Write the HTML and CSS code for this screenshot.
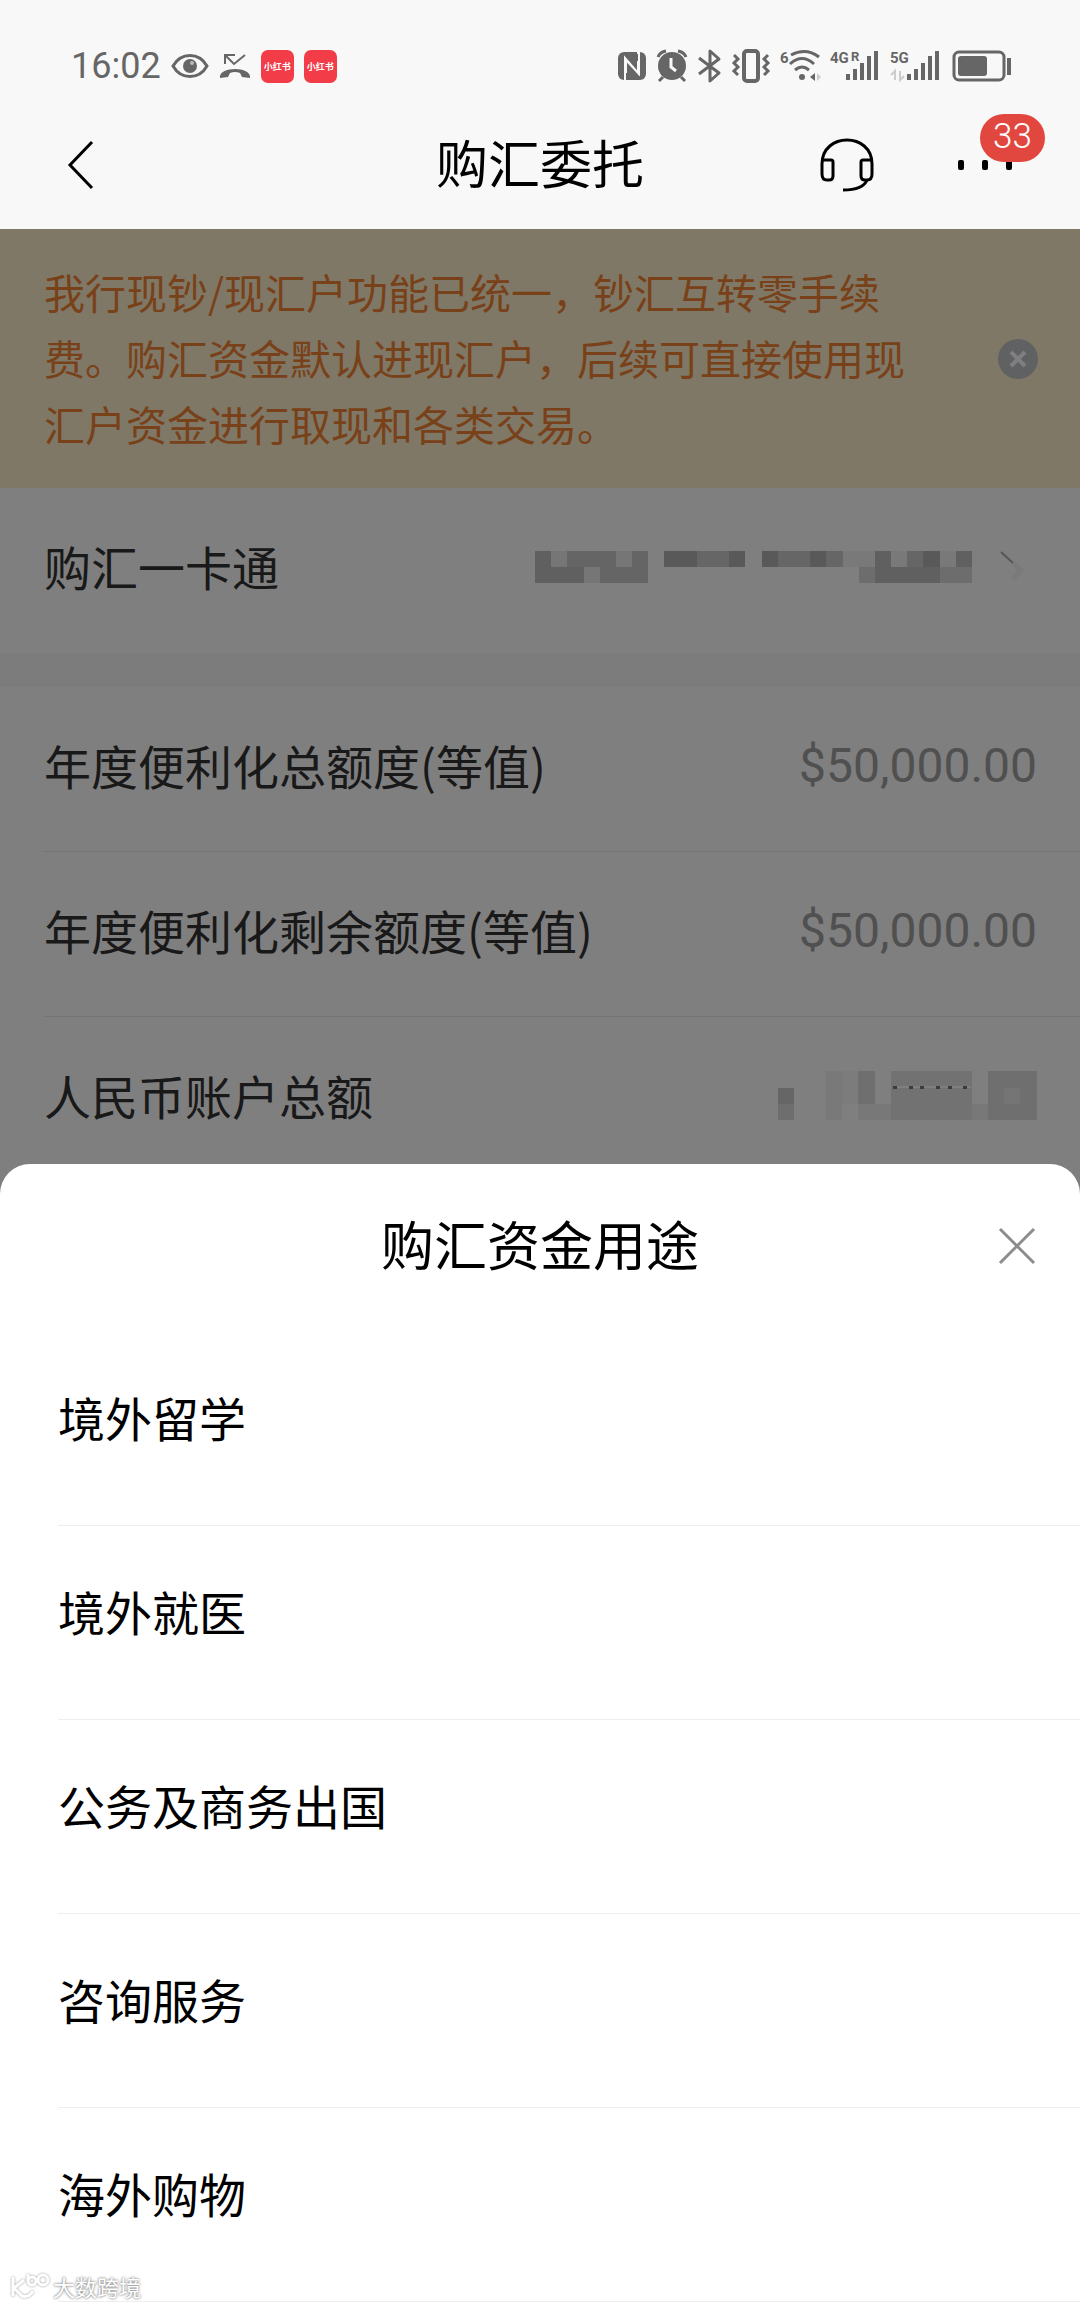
FILE: index.html
```
<!DOCTYPE html>
<html lang="zh-CN">
<head>
  <meta charset="UTF-8" />
  <meta name="viewport" content="width=device-width, initial-scale=1.0" />
  <title>购汇委托</title>
  <link rel="stylesheet" href="styles.css">
</head>
<body>
  <header>
    <div class="status-bar">
      <div class="status-left">
        <span class="time">16:02</span>
        <svg class="eye" width="38" height="26" viewBox="0 0 38 26">
          <path d="M2 13C10 -1 28 -1 36 13C28 27 10 27 2 13Z" fill="none" stroke="#666" stroke-width="3" />
          <circle cx="19" cy="13" r="7" fill="#666" />
          <circle cx="21" cy="10" r="2" fill="#bbb" />
        </svg>
        <svg class="missed-call" width="32" height="26" viewBox="0 0 32 26">
          <path d="M6 11V2H16M6 2L15 11L26 2" fill="none" stroke="#666" stroke-width="2" />
          <path d="M1 25C-1 13 33 13 31 25L23 24L21 20Q16 18 11 20L9 24Z" fill="#666" />
        </svg>
        <span class="app-icon">小红书</span>
        <span class="app-icon">小红书</span>
      </div>
      <div class="status-right">
        <svg width="28" height="34" viewBox="0 0 28 34">
          <rect y="3" width="28" height="28" rx="6" fill="#666" />
          <path d="M7 31V9L20 24V12M20 3V5M21 3V25L8 11V24" fill="none" stroke="#f8f8f8" stroke-width="2" />
        </svg>
        <svg width="32" height="34" viewBox="0 0 32 34">
          <circle cx="16" cy="17" r="14" fill="#666" />
          <path d="M2 8Q4 3 10 2M30 8Q28 3 22 2M7 28L3 32M25 28L29 32" fill="none" stroke="#666" stroke-width="3" />
          <path d="M15 9V18L20 22" fill="none" stroke="#f8f8f8" stroke-width="3" />
        </svg>
        <svg width="24" height="34" viewBox="0 0 24 34">
          <path d="M1 9L21 24L12 32V2L21 10L1 25" fill="none" stroke="#666" stroke-width="3" stroke-linejoin="round" />
        </svg>
        <svg width="38" height="34" viewBox="0 0 38 34">
          <rect x="12" y="2" width="14" height="30" rx="3" fill="none" stroke="#666" stroke-width="4" />
          <path d="M2 6L6 10L2 14L6 18L2 22L6 26M36 6L32 10L36 14L32 18L36 22L32 26" fill="none" stroke="#666" stroke-width="3" />
        </svg>
        <svg width="40" height="34" viewBox="0 0 40 34">
          <text x="0" y="14" class="signal-text">6</text>
          <path d="M11 6Q26 -2 39 8M10 15Q22 4 34 15M15 21Q22 15 29 21" fill="none" stroke="#666" stroke-width="3" />
          <circle cx="22" cy="28" r="3" fill="#666" />
          <path d="M35 24V32L30 28Z" fill="#666" />
          <path d="M37 24V32L41 28Z" fill="#ccc" />
        </svg>
        <svg width="50" height="34" viewBox="0 0 50 34">
          <text x="0" y="14" class="signal-text">4G</text>
          <text x="21" y="12" class="signal-text signal-small">R</text>
          <path d="M18 31V25M25 31V20M32 31V14M39 31V7M46 31V2" stroke="#666" stroke-width="4" />
        </svg>
        <svg width="52" height="34" viewBox="0 0 52 34">
          <text x="0" y="14" class="signal-text">5G</text>
          <path d="M5 31V22L1 26M10 22V31L14 27" fill="none" stroke="#ccc" stroke-width="2" />
          <path d="M19 31V25M26 31V20M33 31V14M40 31V7M47 31V2" stroke="#666" stroke-width="4" />
        </svg>
        <svg width="60" height="34" viewBox="0 0 60 34">
          <rect x="2" y="3" width="50" height="28" rx="5" fill="none" stroke="#666" stroke-width="3" />
          <rect x="6" y="7" width="29" height="20" rx="3" fill="#666" />
          <rect x="55" y="9" width="4" height="17" fill="#666" />
        </svg>
      </div>
    </div>
    <nav>
      <button type="button" class="back-btn" aria-label="返回">
        <svg width="26" height="50" viewBox="0 0 26 50">
          <path d="M24 2L2 25L24 48" fill="none" stroke="#000" stroke-width="3" />
        </svg>
      </button>
      <h1>购汇委托</h1>
      <div class="nav-actions">
        <button type="button" aria-label="客服">
          <svg width="54" height="54" viewBox="0 0 54 54" fill="none" stroke="#000" stroke-width="3">
            <path d="M2 26C2 -6 52 -6 52 26" />
            <path d="M3 22H11Q13 22 13 24V38Q13 42 9 42H7Q2 42 2 36V26" />
            <path d="M51 22H43Q41 22 41 24V38Q41 42 45 42H47Q52 42 52 36V26" />
            <path d="M47 42Q43 52 23 52" />
          </svg>
        </button>
        <button type="button" class="more-btn" aria-label="更多">
          <svg width="54" height="10" viewBox="0 0 54 10">
            <rect width="6" height="10" rx="2" />
            <rect x="24" width="6" height="10" rx="2" />
            <rect x="48" width="6" height="10" rx="2" />
          </svg>
          <span class="badge">33</span>
        </button>
      </div>
    </nav>
  </header>

  <main>
    <div class="notice">
      <p>我行现钞/现汇户功能已统一，钞汇互转零手续费。购汇资金默认进现汇户，后续可直接使用现汇户资金进行取现和各类交易。</p>
      <button type="button" aria-label="关闭提示">
        <svg width="40" height="40" viewBox="0 0 40 40">
          <circle cx="20" cy="20" r="20" fill="#c0c2c6" />
          <path d="M13 13L27 27M27 13L13 27" stroke="#fff" stroke-width="4" />
        </svg>
      </button>
    </div>

    <div class="row">
      <span>购汇一卡通</span>
      <div class="card-number">
        <!-- masked card number -->
        <svg width="437" height="32" viewBox="0 0 27 2" preserveAspectRatio="none" shape-rendering="crispEdges">
          <path d="M0 0h1v1h-1zM0 1h3v1h-3z" fill="#c0c0c0" />
          <path d="M2 0h3v1h-3zM6 0h1v1h-1zM4 1h3v1h-3z" fill="#cacaca" />
          <path d="M1 0h1v1h-1zM5 0h1v1h-1zM3 1h1v1h-1z" fill="#ececec" />
          <path d="M8 0h2v1h-2zM12 0h1v1h-1zM14 0h1v1h-1zM17 0h1v1h-1zM24 0h1v1h-1z" fill="#b2b2b2" />
          <path d="M10 0h2v1h-2zM15 0h2v1h-2zM18 0h1v1h-1zM23 0h1v1h-1z" fill="#cccccc" />
          <path d="M19 0h2v1h-2zM22 0h1v1h-1zM25 0h1v1h-1z" fill="#f2f2f2" />
          <path d="M21 0h1v1h-1zM26 0h1v1h-1zM21 1h4v1h-4z" fill="#c0c0c0" />
          <path d="M20 1h1v1h-1zM25 1h2v1h-2z" fill="#dadada" />
        </svg>
        <svg width="37" height="32" viewBox="0 0 37 32">
          <path d="M1 1L13 12" stroke="#aaa" stroke-width="2" />
          <path d="M13 12L21 19L13 28" fill="none" stroke="#f4f4f4" stroke-width="5" />
        </svg>
      </div>
    </div>

    <div class="group">
      <div class="row">
        <span>年度便利化总额度(等值)</span>
        <span class="amount">$50,000.00</span>
      </div>
      <div class="row">
        <span>年度便利化剩余额度(等值)</span>
        <span class="amount">$50,000.00</span>
      </div>
      <div class="row">
        <span>人民币账户总额</span>
        <!-- masked balance -->
        <svg width="259" height="49" viewBox="0 0 259 49" shape-rendering="crispEdges">
          <rect y="17" width="16" height="16" fill="#ccc" />
          <rect y="33" width="16" height="16" fill="#dcdcdc" />
          <rect x="48" width="16" height="49" fill="#f2f2f2" />
          <rect x="64" width="16" height="33" fill="#f8f8f8" />
          <rect x="80" width="17" height="33" fill="#dedede" />
          <rect x="80" y="33" width="33" height="16" fill="#f0f0f0" />
          <rect x="113" width="81" height="49" fill="#e4e4e4" />
          <rect x="194" y="33" width="16" height="16" fill="#f0f0f0" />
          <rect x="210" width="49" height="49" fill="#dedede" />
          <rect x="226" y="17" width="16" height="16" fill="#eaeaea" />
          <path d="M119 16h74" stroke="#fff" stroke-width="2" />
          <path d="M115 16h4M131 16h4M142 16h4M158 16h4M170 16h4M185 16h4" stroke="#777" stroke-width="3" />
        </svg>
      </div>
    </div>
  </main>

  <section class="sheet" role="dialog" aria-labelledby="sheet-title">
    <div class="sheet-header">
      <h2 id="sheet-title">购汇资金用途</h2>
      <button type="button" class="close-btn" aria-label="关闭">
        <svg width="36" height="36" viewBox="0 0 36 36">
          <path d="M1 1L35 35M35 1L1 35" stroke="#8c8c8c" stroke-width="3" />
        </svg>
      </button>
    </div>
    <ul>
      <li><button type="button">境外留学</button></li>
      <li><button type="button">境外就医</button></li>
      <li><button type="button">公务及商务出国</button></li>
      <li><button type="button">咨询服务</button></li>
      <li><button type="button">海外购物</button></li>
    </ul>
    <div class="watermark">
      <svg width="40" height="28" viewBox="0 0 40 28" fill="none" stroke="#fff" stroke-width="3">
        <path d="M3 5V24M14 8L4 16L12 24Q19 26 23 19" />
        <path d="M18 2V9" />
        <circle cx="22" cy="9" r="4" />
        <circle cx="33" cy="8" r="5" />
      </svg>
      <span>大数跨境</span>
    </div>
  </section>
</body>
</html>
```
FILE: styles.css
```
* {
  box-sizing: border-box;
}
body {
  font-family: "Noto Sans CJK SC", "Noto Sans", sans-serif;
  margin: 0;
  min-height: 100vh;
  display: flex;
  flex-direction: column;
  background-color: #fff;
  color: #000;
}
h1, h2, p, ul {
  margin: 0;
  padding: 0;
  font-weight: normal;
}
ul {
  list-style: none;
}
button {
  padding: 0;
  border: none;
  background: none;
  color: inherit;
  font: inherit;
  cursor: pointer;
}
svg {
  display: block;
  flex-shrink: 0;
  overflow: visible;
}
header {
  background-color: #f8f8f8;
}

/* Status bar */
.status-bar {
  display: flex;
  justify-content: space-between;
  align-items: center;
  height: 100px;
  padding: 32px 68px 0 71px;
}
.status-left, .status-right {
  display: flex;
  align-items: center;
  gap: 10px;
}
.time {
  font-family: Roboto, sans-serif;
  font-size: 36px;
  line-height: 36px;
  color: #666;
}
.app-icon {
  width: 33px;
  height: 33px;
  border-radius: 7px;
  background-color: #f23c48;
  color: #fff;
  font-size: 9px;
  font-weight: bold;
  line-height: 33px;
  text-align: center;
}
.signal-text {
  font-family: Roboto, sans-serif;
  font-size: 15px;
  font-weight: bold;
  fill: #666;
}
.signal-small {
  font-size: 13px;
}

/* Title bar */
nav {
  display: grid;
  grid-template-columns: 1fr auto 1fr;
  align-items: center;
  height: 129px;
  padding: 0 68px;
}
.back-btn {
  justify-self: start;
}
h1 {
  padding-bottom: 6px;
  font-size: 52px;
  line-height: 64px;
}
.nav-actions {
  display: flex;
  justify-content: flex-end;
  align-items: center;
  gap: 84px;
}
.more-btn {
  position: relative;
}
.badge {
  position: absolute;
  left: 22px;
  bottom: 8px;
  width: 65px;
  height: 48px;
  border-radius: 24px;
  background-color: #e2473f;
  color: #fff;
  font-family: Roboto, sans-serif;
  font-size: 35px;
  font-weight: 300;
  line-height: 46px;
}

/* Page under the dimmed layer */
main {
  position: relative;
  padding-bottom: 22px;
}
main::after {
  content: "";
  position: absolute;
  inset: 0;
  background-color: rgba(0, 0, 0, 0.5);
}
.notice {
  display: flex;
  justify-content: space-between;
  align-items: center;
  height: 259px;
  padding: 0 42px 0 44px;
  background-color: #fff0cc;
  color: #f38334;
}
.notice p {
  max-width: 880px;
  padding-bottom: 4px;
  font-size: 41px;
  line-height: 66px;
}
.row {
  display: flex;
  justify-content: space-between;
  align-items: center;
  height: 165px;
  padding: 0 43px 8px 0;
  margin-left: 44px;
  color: #333;
  font-size: 47px;
}
.row span {
  padding-bottom: 2px;
}
.card-number {
  display: flex;
  gap: 28px;
}
.group {
  border-top: 34px solid #f8f8f8;
}
.group .row {
  border-bottom: 1px solid #e8e8e8;
}
.group .amount {
  padding-bottom: 0;
  color: #a0a0a0;
  font-family: Roboto, sans-serif;
  font-size: 48px;
}

/* Bottom sheet */
.sheet {
  position: relative;
  flex: 1;
  margin-top: -40px;
  border-radius: 30px 30px 0 0;
  background-color: #fff;
}
.sheet-header {
  display: grid;
  grid-template-columns: 1fr auto 1fr;
  align-items: center;
  height: 168px;
  padding: 0 45px 4px;
}
h2 {
  grid-column: 2;
  padding-bottom: 6px;
  font-size: 53px;
  line-height: 64px;
}
.close-btn {
  justify-self: end;
}
.sheet li {
  margin-left: 58px;
  border-bottom: 1px solid #eee;
}
.sheet li button {
  display: block;
  width: 100%;
  height: 193px;
  padding-bottom: 24px;
  font-size: 47px;
  text-align: left;
}
.watermark {
  position: absolute;
  left: 10px;
  bottom: 4px;
  display: flex;
  align-items: center;
  gap: 3px;
  color: #fff;
  font-size: 22px;
  line-height: 32px;
  text-shadow: 0 0 3px #888, 0 0 2px #999;
}
.watermark svg {
  filter: drop-shadow(0 0 1px #999);
}
```
